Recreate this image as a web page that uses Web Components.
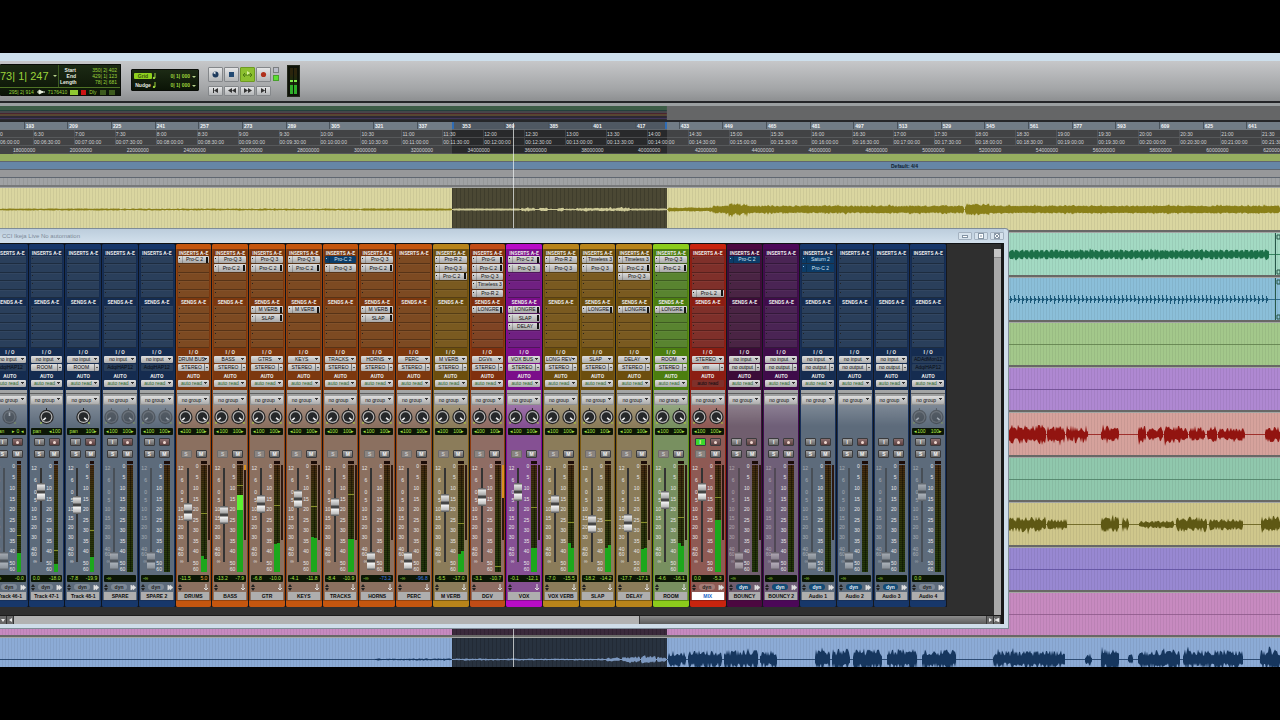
<!DOCTYPE html>
<html lang="en">
<head>
<meta charset="utf-8">
<title>CCI Ikeja Live No automation</title>
<style>
    html, body { margin: 0; height: 100%; background: #000; }
    body {
        font-family: "Liberation Sans", Arial, sans-serif;
        overflow: hidden;
    }
</style>
</head>
<body>
<session-window></session-window>

<script>
const SEL_START = 452;
const SEL_END = 667;

class BaseElement extends HTMLElement {
    constructor() {
        super();
        this.shadowDOM = this.attachShadow({mode: "open"});
    }

    connectedCallback() {
        this.render();
    }
}

// small repeatable noise, so the waveforms are the same on every load
function noise(seed) {
    let s = seed;
    return () => {
        s = (s * 16807) % 2147483647;
        return s / 2147483647;
    };
}

function wavePath(x0, x1, amp, mid, rnd, floor = 0.35) {
    const up = [];
    const down = [];
    for (let x = x0; x <= x1; x++) {
        const env = Math.min(1, (x - x0 + 1) / 2, (x1 - x + 1) / 2);
        const spike = rnd() > 0.9 ? 1.3 : 1;
        up.push(`${x} ${(mid - amp * env * spike * (floor + rnd() * (1 - floor))).toFixed(1)}`);
        down.unshift(`${x} ${(mid + amp * env * spike * (floor + rnd() * (1 - floor))).toFixed(1)}`);
    }
    return `M${up.join('L')}L${down.join('L')}Z`;
}

/* ---------- edit window: toolbar ---------- */

class EditToolbar extends BaseElement {
    render() {
        const note = '<svg width="4" height="6"><path d="M3 0v5" stroke="#9bd33a"/><circle cx="2" cy="5" r="1.200" fill="#9bd33a"/></svg>';
        this.shadowDOM.innerHTML = `
        <style>
        :host {
            display: flex;
            align-items: center;
            height: 40px;
            background: linear-gradient(#c6c7c9, #a3a5a7 70%, #8d8f91);
            border-bottom: 2px solid #242528;
            color: #9bd33a;
            font-size: 5px;
            font-weight: bold;
            line-height: 6px;
        }
        .lcd {
            background: linear-gradient(#1c2a14, #0b1406);
            border: 1px solid #0a0d08;
            border-radius: 1px;
            box-sizing: border-box;
            margin-bottom: 2px;
        }
        .counter {
            width: 121px;
            height: 32px;
            border-left: 0;
        }
        .top {
            display: flex;
            height: 22px;
            border-bottom: 1px solid #4f7326;
        }
        .main {
            width: 58px;
            font-size: 11px;
            font-weight: normal;
            line-height: 21px;
            white-space: nowrap;
            display: flex;
            align-items: center;
            gap: 4px;
            border-right: 1px solid #3c5a20;
        }
        i {
            display: inline-block;
            border: 2px solid transparent;
            border-top-color: #b7d48c;
            border-bottom: 0;
        }
        dl {
            flex: 1;
            margin: 2px 3px 0 1px;
            display: grid;
            grid-template-columns: 16px 1fr;
            grid-auto-rows: 6px;
            text-align: right;
        }
        dt { color: #e6ebe0; }
        dd { margin: 0; font-weight: normal; }
        .sub {
            display: flex;
            align-items: center;
            height: 8px;
            gap: 3px;
            padding-left: 9px;
            font-weight: normal;
        }
        .sub b { width: 6px; height: 5px; background: #3c5a1c; }
        .sub b.on { background: #8fc832; width: 8px; }
        .sub b.rec { background: #cc1414; width: 5px; }
        .nudge {
            width: 68px;
            height: 22px;
            margin-left: 10px;
            padding: 1px 2px;
            display: grid;
            grid-template-columns: 18px 6px 1fr 6px;
            grid-auto-rows: 9px;
            align-items: center;
            text-align: right;
        }
        .nudge span:nth-child(4n+1) { color: #e6ebe0; text-align: center; }
        .nudge span.on {
            background: #8fd01e;
            color: #35520c;
            border-radius: 1px;
        }
        .transport {
            display: grid;
            grid-template-columns: repeat(4, 15px);
            grid-template-rows: 15px 10px;
            gap: 4px 1px;
            margin-left: 9px;
        }
        button {
            padding: 0;
            border: 1px solid #84878a;
            border-radius: 1px;
            background: linear-gradient(#e4e5e6, #b4b6b8);
            display: grid;
            place-items: center;
        }
        button.on { background: #8cc030; border-color: #6d9a20; }
        svg { display: block; }
        .leds {
            display: grid;
            gap: 2px;
            margin: 0 8px 14px 2px;
        }
        .leds span {
            width: 4px;
            height: 4px;
            border: 1px solid #7a7d80;
            background: #b9bcc8;
        }
        .leds .on { background: #5ce032; border-color: #48a02c; }
        .meter {
            width: 13px;
            height: 32px;
            background: #0e1208;
            border: 1px solid #23281c;
            box-sizing: border-box;
            display: flex;
            justify-content: center;
            align-items: end;
            gap: 1px;
            padding-bottom: 2px;
        }
        .meter span {
            width: 3px;
            height: 26px;
            background: linear-gradient(#2b240c 6px, #1b2b0c 12px, #7ee84a 12px 14px, #1b2b0c 14px 17px, #2fae2a 17px);
        }
        </style>

        <div class="lcd counter">
            <div class="top">
                <div class="main"><span>73| 1| 247</span><i></i></div>
                <dl>
                    <dt>Start</dt><dd>350| 2| 402</dd>
                    <dt>End</dt><dd>429| 1| 123</dd>
                    <dt>Length</dt><dd>78| 2| 681</dd>
                </dl>
            </div>
            <div class="sub">
                <span>295| 2| 914</span>
                <svg width="8" height="6"><path d="M0 3h8M2 1v4l4-2z" stroke="#e8f0dc" fill="#e8f0dc"/></svg>
                <span>7176410</span>
                <b class="on"></b><b class="rec"></b><span>Dly</span><b></b><b></b>
            </div>
        </div>
        <div class="lcd nudge">
            <span class="on">Grid</span><span>${note}</span><span>0| 1| 000</span><span><i></i></span>
            <span>Nudge</span><span>${note}</span><span>0| 1| 000</span><span><i></i></span>
        </div>
        <div class="transport">
            <button aria-label="Online"><svg width="9" height="9"><circle cx="4.5" cy="4.5" r="3" fill="#1d3a5c"/><path d="M4.500 4.500V1.500A3 3 0 0 0 2 3z" fill="#dfe3e8"/></svg></button>
            <button aria-label="Stop"><svg width="7" height="7"><rect x="1" y="1" width="5" height="5" fill="#234a72"/></svg></button>
            <button class="on" aria-label="Loop play"><svg width="11" height="9"><path d="M1 5h8M3 3L1 5l2 2M8 3l2 2-2 2" stroke="#4d7a14" fill="none"/><path d="M5 1l3 2-3 2z" fill="#d8f0a0"/></svg></button>
            <button aria-label="Record"><svg width="7" height="7"><circle cx="3.500" cy="3.500" r="2.600" fill="#b0301c"/></svg></button>
            <button aria-label="Return to zero"><svg width="7" height="5"><path d="M1 0h1v5H1zM6 0v5L2 2.500z" fill="#333"/></svg></button>
            <button aria-label="Rewind"><svg width="8" height="5"><path d="M4 0v5L0 2.500zM8 0v5L4 2.500z" fill="#333"/></svg></button>
            <button aria-label="Fast forward"><svg width="8" height="5"><path d="M0 0v5l4-2.500zM4 0v5l4-2.500z" fill="#333"/></svg></button>
            <button aria-label="Go to end"><svg width="7" height="5"><path d="M5 0h1v5H5zM1 0v5l4-2.500z" fill="#333"/></svg></button>
        </div>
        <div class="leds"><span></span><span class="on"></span></div>
        <div class="meter"><span></span><span></span></div>
        `;
    }
}

/* ---------- edit window: rulers ---------- */

class TimeRuler extends BaseElement {
    render() {
        const two = n => String(n).padStart(2, '0');
        const cells = (n, text) => Array.from({length: n}, (_, i) => `<span>${text(i)}</span>`).join('');
        const secs = i => 360 + i * 30;

        this.shadowDOM.innerHTML = `
        <style>
        :host {
            display: block;
            position: relative;
            font-size: 5px;
            line-height: 8px;
            color: #d2d4d6;
        }
        .overview {
            height: 14px;
            border-top: 3px solid #9b9fa1;
            border-bottom: 2px solid #26272a;
            background: linear-gradient(#3c5c46 4px, #23403c 4px 5px, #46464a 5px 7px, #4a2430 7px 8px, #574632 8px 10px, #2c2836 10px 12px, #41365a 12px 13px, #2c2c30 13px) 0 0 / 52.1% 100% no-repeat #656667;
        }
        .row {
            display: grid;
            grid-auto-flow: column;
            grid-auto-columns: 1fr;
            overflow: hidden;
            height: 7px;
            border-bottom: 1px solid rgba(120, 122, 124, 0.4);
        }
        .clip {
            overflow: hidden;
            background: linear-gradient(#28292b, #28292b) 42.4% 0 / 16.8% 100% no-repeat #424345;
        }
        .clip.bars {
            background: linear-gradient(#4f5862, #4f5862) 42.4% 0 / 16.8% 100% no-repeat #717c86;
            color: #f2f4f6;
            font-weight: bold;
        }
        .bars .row { margin: 0 -10px 0 -20px; }
        .bars span { border-left: 1px solid #4b545c; padding-left: 1px; }
        .time .row { margin: 0 -22px 0 -8px; }
        .time span { border-left: 1px solid rgba(120, 122, 124, 0.3); }
        .samples .row { margin: 0 -40px 0 13px; }
        .bar {
            height: 7px;
            border-bottom: 1px solid #5f6670;
            color: #0e1c30;
            font-weight: bold;
            display: grid;
            grid-template-columns: 891fr 389fr;
        }
        .tempo { background: #96ae60; }
        .meter { background: #6686a6; }
        .markers { background: #97989a; }
        .edge {
            height: 7px;
            border-bottom: 2px solid #77787a;
            background: repeating-linear-gradient(90deg, #a0a2a4 0 3px, #969899 3px 4px);
        }
        .selection {
            position: absolute;
            top: 19px;
            left: 35.3%;
            width: 16.8%;
            height: 7px;
            border: solid #2f6cb4;
            border-width: 0 2px;
            box-sizing: border-box;
        }
        </style>

        <div class="overview"></div>
        <div class="clip bars"><div class="row">${cells(30, i => 177 + i * 16)}</div></div>
        <div class="clip time"><div class="row">${cells(32, i => Math.floor(secs(i) / 60) + ':' + two(secs(i) % 60))}</div></div>
        <div class="clip time"><div class="row">${cells(32, i => `00:${two(Math.floor(secs(i) / 60))}:${two(secs(i) % 60)}:00`)}</div></div>
        <div class="clip samples"><div class="row">${cells(23, i => (18 + i * 2) + '000000')}</div></div>
        <div class="bar tempo"></div>
        <div class="bar meter"><span></span><span>Default: 4/4</span></div>
        <div class="bar markers"></div>
        <div class="edge"></div>
        <div class="selection"></div>
        `;
    }
}

/* ---------- edit window: track lanes ---------- */

// segments are [from, to, amplitude, floor]
const lanes = [
    {bg: '#dad6a0', wave: '#8a8018', sel: '#4b4834', lit: '#cfcb98', segs: [
        [0, 120, 1, .6], [121, 360, 1, .4], [361, 452, 1, .8],
        [453, 520, 1, .8], [521, 535, 2], [536, 538, 1], [539, 548, 2], [549, 556, 1], [557, 564, 2],
        [565, 575, 1], [576, 630, 2], [631, 667, 1, .7],
        [668, 715, 2, .6], [712, 729, 4, .6], [728, 748, 6, .5], [740, 964, 4, .7], [965, 990, 6, .6], [985, 1280, 4, .75]
    ]},
    {bg: '#a3dac3', wave: '#1c7048', sel: '#2e4038', segs: Array.from({length: 52}, (_, i) => [1009 + i * 5, 1014 + i * 5, 5, .7]), end: true},
    {bg: '#8bbfd9', wave: '#1a5878', sel: '#2a3c48', ticks: true, end: true},
    {bg: '#a3c88b', wave: '#5c7c48', sel: '#343c2c', segs: []},
    {bg: '#af88d2', wave: '#69478c', sel: '#362c40', segs: []},
    {bg: '#d6a29c', wave: '#921410', sel: '#443230', segs: [[1008, 1046, 10], [1047, 1065, 9], [1066, 1088, 9, .2], [1101, 1119, 8], [1138, 1146, 9], [1147, 1163, 7], [1164, 1188, 9], [1189, 1205, 7], [1207, 1217, 9], [1218, 1245, 7], [1265, 1280, 8]]},
    {bg: '#90c8ad', wave: '#4a7c62', sel: '#2c3c34', segs: []},
    {bg: '#cfc78c', wave: '#5e5814', sel: '#403c2c', segs: [[1008, 1046, 8], [1047, 1067, 6], [1101, 1119, 8], [1122, 1129, 6], [1139, 1174, 4], [1176, 1207, 8], [1209, 1243, 6], [1261, 1280, 9]]},
    {bg: '#9888d2', wave: '#5c4c9c', sel: '#302c40', segs: []},
    {bg: '#c78ac0', wave: '#8c5888', sel: '#3b2a3c', segs: []},
    {bg: '#8cabd6', wave: '#16365e', sel: '#28323f', lit: '#7c98c0', segs: [
        [375, 451, 1, .2], [453, 605, 1, .2], [606, 620, 2], [622, 640, 3], [641, 656, 4], [657, 666, 3],
        [668, 686, 8], [688, 722, 9], [724, 758, 10], [760, 777, 9], [815, 830, 11], [832, 850, 11], [853, 882, 11],
        [887, 917, 11], [922, 956, 10], [993, 1065, 9], [1085, 1092, 5], [1101, 1119, 11], [1128, 1133, 5],
        [1138, 1180, 10], [1183, 1243, 10], [1260, 1280, 11]
    ]}
];

class TrackLane extends BaseElement {
    render() {
        const lane = this.lane;
        const rnd = noise(this.index * 977 + 31);
        let waves = '';
        if (lane.ticks) {
            let d = '';
            for (let x = 1010; x < 1270; x += 4) {
                d += `M${x}.5 ${rnd() > .5 ? 17 : 18}v${rnd() > .5 ? 8 : 7}M${x + 1}.5 20v3`;
            }
            waves = `<path d="${d}" stroke="${lane.wave}"/>`;
        } else {
            waves = lane.segs.map(([a, b, amp, floor]) => {
                const lit = lane.lit && a >= SEL_START && b <= SEL_END;
                return `<path d="${wavePath(a, b, amp, 21.5, rnd, floor)}" fill="${lit ? lane.lit : lane.wave}"/>`;
            }).join('');
        }
        this.shadowDOM.innerHTML = `
        <style>
        :host {
            display: block;
            height: 42px;
            border-top: 1px solid #a4a6a4;
            border-bottom: 2px solid #686866;
            background: repeating-linear-gradient(90deg, transparent 0 2px, rgba(0, 0, 0, 0.06) 2px 3px) ${lane.bg};
        }
        svg { display: block; width: 100%; height: 42px; }
        </style>
        <svg viewBox="0 0 1280 42" preserveAspectRatio="none">
            <rect x="${SEL_START}" width="${SEL_END - SEL_START}" height="42" fill="${lane.sel}"/>
            <path d="${Array.from({length: 54}, (_, i) => `M${SEL_START + i * 4}.5 0v42`).join('')}" stroke="#000" stroke-opacity=".15"/>
            <path d="M0 21.500H1280" stroke="${lane.wave}" stroke-opacity=".8"/>
            ${lane.lit ? `<path d="M${SEL_START} 21.500H${SEL_END}" stroke="${lane.lit}"/>` : ''}
            ${waves}
            ${lane.end ? '<path d="M1275.500 0v42M1277 2h3v4h-3zM1277 37h3v4h-3z" stroke="#28584a" fill="none"/>' : ''}
        </svg>
        `;
    }
}

/* ---------- mixer parts ---------- */

class PluginSlot extends BaseElement {
    render() {
        const name = this.getAttribute('name');
        this.shadowDOM.innerHTML = `
        <style>
        :host {
            display: grid;
            background: var(--slot);
            box-shadow: inset 0 -1px rgba(0, 0, 0, 0.3), inset 0 1px rgba(255, 255, 255, 0.04);
            min-width: 0;
        }
        button {
            display: grid;
            grid-template-columns: 4px 1fr auto;
            align-items: center;
            margin: 0 0 1px;
            padding: 0;
            border: 0;
            border-radius: 1px;
            background: linear-gradient(#dcdcdc, #a9a9a9);
            color: #0c0c0c;
            font: 5px/7px "Liberation Sans", Arial, sans-serif;
            white-space: nowrap;
        }
        button::before, .empty::before {
            content: "";
            display: block;
            width: 1px;
            height: 1px;
            margin: 2px 1px;
            background: #222;
            align-self: start;
        }
        :host([blue]) button { background: #0c3c68; color: #d4e4f4; }
        :host([blue]) button::before { background: #9cc4e8; }
        span { border-left: 1px solid rgba(0, 0, 0, 0.2); }
        b { width: 2px; height: 6px; margin-right: 1px; background: #111; }
        </style>
        ${name
            ? `<button><span>${name}</span>${this.hasAttribute('gain') ? '<b></b>' : ''}</button>`
            : '<div class="empty"></div>'}
        `;
    }
}

class PanKnob extends BaseElement {
    render() {
        const dim = this.hasAttribute('dim');
        this.shadowDOM.innerHTML = `
        <style>
        :host { display: grid; width: 17px; height: 18px; ${dim ? 'opacity: .4;' : ''} }
        svg, input { grid-area: 1 / 1; width: 100%; height: 100%; margin: 0; }
        input { opacity: 0; }
        </style>
        <svg viewBox="0 0 17 18">
            <circle cx="8.500" cy="9" r="7.200" fill="#242424"/>
            <circle cx="8.500" cy="9" r="6" fill="${dim ? '#666' : '#b8b8b8'}"/>
            <circle cx="8.500" cy="9" r="4.800" fill="#26282a"/>
            <path d="M8.500 8V4.500" stroke="#f4f4f4" stroke-width="1.600" transform="rotate(${this.getAttribute('turn')} 8.500 9)"/>
            <path d="M8.500 0v2" stroke="#222"/>
            <path d="${this.getAttribute('turn') < 0 ? 'M2 15h2' : 'M13 15h2'}" stroke="#b4d838"/>
        </svg>
        <input type="range" aria-label="Pan" min="-135" max="135" value="${this.getAttribute('turn')}">
        `;
    }
}

class LevelMeter extends BaseElement {
    render() {
        const levels = this.getAttribute('levels').split('/');
        const peak = this.getAttribute('peak');
        this.shadowDOM.innerHTML = `
        <style>
        :host {
            display: grid;
            grid-template-rows: 3px 1fr;
            gap: 1px;
        }
        .clip { background: #1c0c08; }
        .cols {
            display: flex;
            background: #14180a;
            position: relative;
        }
        .cols div {
            flex: 1;
            display: flex;
            align-items: end;
            background: repeating-linear-gradient(transparent 0 1px, rgba(0, 0, 0, 0.25) 1px 2px), linear-gradient(#462a10, #38360c 30%, #20360a);
        }
        .cols div + div { box-shadow: inset 1px 0 rgba(0, 0, 0, 0.35); }
        .cols span { width: 100%; background: #1ca81c; }
        .cols span.hot { background: linear-gradient(#5cf032 15px, #1ca81c 15px); }
        hr {
            position: absolute;
            left: 0;
            right: 0;
            margin: 0;
            border: 0;
            height: 1px;
            background: #868e2a;
        }
        </style>
        <div class="clip"></div>
        <div class="cols">
            ${levels.map(l => `<div><span class="${l > 60 ? 'hot' : ''}" style="height:${l}px"></span></div>`).join('')}
            ${peak ? `<hr style="bottom:${peak}px">` : ''}
        </div>
        `;
    }
}

const themes = {
    navy:    {cap: '#17376a', body: '#152c50', slot: '#2a3f5b', panel: '#5d6b7b', edge: '#17305a'},
    orange:  {cap: '#c4560f', body: '#7c380f', slot: '#7d4a22', panel: '#8b7060', edge: '#94430e'},
    mustard: {cap: '#b8841a', body: '#6c4e0e', slot: '#7a5a20', panel: '#8b7c5a', edge: '#7c5a12'},
    rust:    {cap: '#c04c16', body: '#80300e', slot: '#7f4424', panel: '#8f6d64', edge: '#8e3a0f'},
    magenta: {cap: '#b80cc6', body: '#7b0e8a', slot: '#702082', panel: '#855093', edge: '#880a96'},
    green:   {cap: '#8ccc1c', body: '#4c7e10', slot: '#598430', panel: '#789060', edge: '#5c9012'},
    red:     {cap: '#c8240e', body: '#8b1d12', slot: '#7f302a', panel: '#8e5a54', edge: '#921e12'},
    plum:    {cap: '#4c0840', body: '#3c0c38', slot: '#4a2444', panel: '#705e6e', edge: '#420c3c'},
    violet:  {cap: '#4c0858', body: '#3f0c4a', slot: '#4a2454', panel: '#6f5f78', edge: '#440c50'}
};

// inserts and sends: "*" marks a chip with a small meter, "!" a bypassed (blue) one
const channels = [
    {name: 'Track 46-1', out: '~AdqiHAP12', knobs: 'C', level: '19', peak: 36, fader: 0, vol: '-∞', db: '-0.0', audio: 1, dim: 1},
    {name: 'Track 47-1', out: 'ROOM', knobs: 'L', level: '8', peak: 21, fader: 69, vol: '0.0', db: '-18.0', audio: 1},
    {name: 'Track 48-1', out: 'ROOM', knobs: 'R', level: '15', peak: 41, fader: 56, vol: '-7.8', db: '-19.9', audio: 1},
    {name: 'SPARE', out: '~AdqiHAP12', level: '0/0', fader: 0, vol: '-∞', audio: 1, dim: 1},
    {name: 'SPARE 2', out: '~AdqiHAP12', level: '0/0', fader: 0, vol: '-∞', audio: 1, dim: 1},
    {name: 'DRUMS', theme: 'orange', ins: ['Pro-C 2*'], inp: 'DRUM BUS', level: '16/13', peak: 58, gr: 1, fader: 49, vol: '-11.5', db: '5.0', dbColor: '#e8a838'},
    {name: 'BASS', theme: 'orange', ins: ['Pro-Q 3', 'Pro-C 2*'], inp: 'BASS', level: '77/77', peak: 86, gr: 1, grHot: 5, fader: 46, vol: '-13.2', db: '-7.9'},
    {name: 'GTR', theme: 'orange', ins: ['Pro-Q 3', 'Pro-C 2*'], sends: ['M VERB*', 'SLAP*'], inp: 'GTRS', level: '28/29', peak: 66, gr: 1, fader: 57, vol: '-6.8', db: '-10.0'},
    {name: 'KEYS', theme: 'orange', ins: ['Pro-Q 3', 'Pro-C 2*'], sends: ['M VERB*'], inp: 'KEYS', level: '35/34', peak: 65, gr: 1, fader: 62, vol: '-4.1', db: '-11.8'},
    {name: 'TRACKS', theme: 'orange', ins: ['Pro-C 2!', 'Pro-Q 3'], inp: 'TRACKS', level: '33/33', peak: 77, gr: 1, fader: 54, vol: '-8.4', db: '-10.9'},
    {name: 'HORNS', theme: 'orange', ins: ['Pro-Q 3', 'Pro-C 2*'], sends: ['M VERB*', 'SLAP*'], inp: 'HORNS', level: '0/0', gr: 1, fader: 0, vol: '-∞', db: '-73.2', dbColor: '#3c7ce0'},
    {name: 'PERC', theme: 'orange', inp: 'PERC', level: '0/0', fader: 0, vol: '-∞', db: '-96.8', dbColor: '#3c7ce0'},
    {name: 'M VERB', theme: 'mustard', ins: ['Pro-R 2', 'Pro-Q 3', 'Pro-C 2*'], inp: 'M VERB', level: '18/21', peak: 48, gr: 1, fader: 58, vol: '-6.5', db: '-17.0'},
    {name: 'DGV', theme: 'rust', ins: ['Pro-G*', 'Pro-C 2*', 'Pro-Q 3', 'Timeless 3', 'Pro-R 2'], sends: ['LONGRE*'], inp: 'DGVs', level: '0/0', peak: 5, gr: 1, grHot: 33, fader: 64, vol: '-3.1', db: '-10.7'},
    {name: 'VOX', theme: 'magenta', ins: ['Pro-C 2*', 'Pro-Q 3'], sends: ['LONGRE*', 'SLAP*', 'DELAY*'], inp: 'VOX BUS', level: '24/24', peak: 64, gr: 1, fader: 69, vol: '-0.1', db: '-12.1'},
    {name: 'VOX VERB', theme: 'mustard', ins: ['Pro-R 2', 'Pro-Q 3'], inp: 'LONG REV', level: '29/24', peak: 49, fader: 57, vol: '-7.0', db: '-15.5'},
    {name: 'SLAP', theme: 'mustard', ins: ['Timeless 3', 'Pro-Q 3'], sends: ['LONGRE*'], inp: 'SLAP', level: '24/27', peak: 51, fader: 37, vol: '-18.2', db: '-14.2'},
    {name: 'DELAY', theme: 'mustard', ins: ['Timeless 3', 'Pro-C 2*', 'Pro-Q 3'], sends: ['LONGRE*'], inp: 'DELAY', level: '23/24', peak: 49, gr: 1, fader: 38, vol: '-17.7', db: '-17.1'},
    {name: 'ROOM', theme: 'green', ins: ['Pro-Q 3', 'Pro-C 2*'], sends: ['LONGRE*'], inp: 'ROOM', level: '29/26', peak: 54, gr: 1, fader: 61, vol: '-4.6', db: '-16.1'},
    {name: 'MIX', theme: 'red', ins: ['', '', '', '', 'Pro-L 2*'], inp: 'STEREO', out: 'vm', auto: '~auto read', level: '52/52', peak: 74, gr: 1, fader: 69, vol: '0.0', db: '-5.3', audio: 1, monitor: 1, selected: 1},
    {name: 'BOUNCY', theme: 'plum', ins: ['Pro-C 2!'], out: 'no output', knobs: '', level: '0/0', gr: 1, fader: 0, vol: '-∞', audio: 1, dyn: 1, dim: 1},
    {name: 'BOUNCY 2', theme: 'violet', out: 'no output', knobs: '', level: '0/0', fader: 0, vol: '-∞', audio: 1, dyn: 1, dim: 1},
    {name: 'Audio 1', ins: ['Saturn 2!', 'Pro-C 2!'], out: 'no output', knobs: '', level: '0/0', gr: 1, fader: 0, vol: '-∞', audio: 1, dyn: 1, dim: 1},
    {name: 'Audio 2', out: 'no output', knobs: '', level: '0/0', fader: 0, vol: '-∞', audio: 1, dyn: 1, dim: 1},
    {name: 'Audio 3', out: 'no output', knobs: '', level: '0/0', fader: 0, vol: '-∞', audio: 1, dyn: 1, dim: 1},
    {name: 'Audio 4', inp: '~ADAdMon12', out: '~AdqiHAP12', level: '0/0', fader: 69, vol: '0.0', audio: 1, dim: 1}
];

class ChannelStrip extends BaseElement {
    slots(list = []) {
        return Array.from({length: 5}, (_, i) => {
            const item = list[i] || '';
            return `<plugin-slot name="${item.replace(/[*!]/, '')}"${item.endsWith('*') ? ' gain' : ''}${item.endsWith('!') ? ' blue' : ''}></plugin-slot>`;
        }).join('');
    }

    // a leading "~" means the path is not available
    select(label, value, cls = '') {
        const off = value.startsWith('~');
        return `<select aria-label="${label}" class="${cls}${off ? ' off' : ''}"><option>${value.replace('~', '')}</option></select>`;
    }

    pan(ch) {
        const kinds = ch.knobs === undefined ? 'LR' : ch.knobs;
        const turn = {L: -135, R: 135, C: 0};
        const dim = ch.dim ? ' dim' : '';
        const read = {LR: '<span>◂100</span><span>100▸</span>', L: '<span>pan</span><span>◂100</span>', R: '<span>pan</span><span>100▸</span>', C: '<span>pan</span><span>▸ 0 ◂</span>'};
        return `
        <div class="knobs">${[...kinds].map(k => `<pan-knob turn="${turn[k]}"${dim}></pan-knob>`).join('')}</div>
        <div class="lcd${kinds ? '' : ' none'}">${read[kinds] || ''}</div>`;
    }

    render() {
        const ch = this.channel;
        const t = themes[ch.theme || 'navy'];
        const scale = list => list.map(n => `<span>${n}</span>`).join('');

        this.shadowDOM.innerHTML = `
        <style>
        :host {
            --slot: ${t.slot};
            display: flex;
            flex-direction: column;
            min-width: 0;
            margin-right: 1px;
            background: ${t.edge};
            border-radius: 2px;
            overflow: hidden;
            font-size: 5px;
            font-weight: bold;
            color: #e6e6e6;
            line-height: 7px;
        }
        .cap { height: 5px; background: ${t.cap}; }
        .cap.foot { height: 6px; margin-top: 1px; }
        .upper {
            height: 141px;
            margin: 0 1px;
            padding: 0 1px;
            background: ${t.body};
        }
        h3 {
            height: 8px;
            margin: 0;
            font: bold 5px/8px Roboto, "Liberation Sans", Arial, sans-serif;
            text-align: center;
            white-space: nowrap;
        }
        h3:first-child, h3.auto { height: 7px; }
        h3.auto { margin-top: 2px; line-height: 7px; }
        .slots {
            display: grid;
            grid-template-rows: repeat(5, 1fr);
            height: 42px;
        }
        select {
            display: block;
            appearance: none;
            width: 100%;
            height: 7px;
            margin: 0 0 1px;
            padding: 0 4px 0 0;
            border: 0;
            border-radius: 1px;
            background:
                linear-gradient(#333, #333) right 2px top 2px / 3px 1px no-repeat,
                linear-gradient(#333, #333) right 3px top 3px / 1px 1px no-repeat,
                linear-gradient(#dedede, #adadad);
            color: #0c0c0c;
            font: 5px/7px "Liberation Sans", Arial, sans-serif;
            text-align: center;
            text-align-last: center;
        }
        select.out {
            background:
                linear-gradient(#777, #777) right 4px top / 1px 7px no-repeat,
                linear-gradient(#555, #555) right 1px top 3px / 2px 1px no-repeat,
                linear-gradient(#dedede, #adadad);
        }
        select.read { color: #2c6a2c; }
        select.off { background: var(--slot); color: #060a12; padding: 0; }
        .lower {
            display: flex;
            flex-direction: column;
            height: 204px;
            margin: 0 1px;
            padding: 6px 1px 0;
            background:
                linear-gradient(rgba(50, 50, 50, 0.6), rgba(50, 50, 50, 0.6)) 0 3px / 100% 1px no-repeat,
                linear-gradient(#a4a6a6, #909292) 0 0 / 100% 15px no-repeat,
                linear-gradient(#fff3 15px, transparent 36px),
                ${t.panel};
        }
        .group { height: 8px; margin: 0; }
        .knobs {
            display: flex;
            justify-content: center;
            height: 18px;
            margin: 4px -1px 2px;
        }
        .lcd {
            display: flex;
            flex: none;
            justify-content: space-between;
            box-sizing: border-box;
            height: 7px;
            padding: 0 2px;
            border-radius: 1px;
            background: #0c1606;
            color: #b0e848;
            font-weight: normal;
            white-space: nowrap;
        }
        .lcd.none { visibility: hidden; }
        .keys {
            display: grid;
            grid-template-columns: 11px 11px;
            justify-content: center;
            gap: 4px;
            height: 8px;
            margin-top: 3px;
        }
        .keys + .keys { margin-top: 4px; }
        .keys button {
            padding: 0;
            border: 1px solid #3a3a3c;
            border-radius: 1px;
            background: linear-gradient(#a4a4a4, #626262);
            color: #f4f4f4;
            font: bold 5px/6px "Liberation Sans", Arial, sans-serif;
        }
        .keys .rec { background: linear-gradient(#8c7070, #5a3e3e); }
        .keys .rec::before {
            content: "";
            display: block;
            width: 3px;
            height: 3px;
            margin: auto;
            border-radius: 50%;
            background: #f0d8d0;
        }
        .keys .live { background: #3cd82c; }
        .keys .safe { background: #8a8480; color: #ccc; border-color: #6e6a68; }
        .throw {
            display: grid;
            grid-template-columns: 6px 8px 7px ${ch.level.includes('/') ? '8px' : '6px'} 3px;
            height: 109px;
            margin: 3px -1px 0 0;
            font-weight: normal;
            line-height: 6px;
            text-align: right;
        }
        .scale { display: grid; align-content: start; color: #e8e8e8; }
        .fade { grid-template-rows: 12px 12px 8px 9px 9px 9px 10px 12px 5px 7px 6px; padding-top: 4px; }
        .scale.dim { opacity: .5; }
        .vu { grid-template-rows: 11px 11px 11px 10px 11px 10px 11px 10px 12px 6px 6px; padding-top: 2px; }
        level-meter { margin-left: 2px; }
        .throw input {
            appearance: none;
            writing-mode: vertical-lr;
            direction: rtl;
            width: 8px;
            height: 108px;
            margin: 1px 0 0;
            background: linear-gradient(#333, #333) 3px 6px / 2px 94px no-repeat;
            ${ch.dim ? 'opacity: .5;' : ''}
        }
        .throw input::-webkit-slider-thumb {
            appearance: none;
            width: 8px;
            height: 18px;
            border-radius: 1px;
            background: linear-gradient(#6a6a6a 1px, #e4e4e4 2px, #a8a8a8 7px, #444 8px 10px, #f4f4f4 11px, #bcbcbc 16px, #666 17px);
        }
        .gr { height: 75px; margin: 4px 0 0 1px; }
        .gr.on { background: linear-gradient(#d89020, #d89020) 0 0 / 100% ${ch.grHot || 0}px no-repeat #2c1810; }
        .vol { margin-top: 5px; }
        .vol span:last-child:not(:first-child) { color: ${ch.dbColor || 'inherit'}; }
        .dyn {
            display: grid;
            grid-template-columns: 4px 1fr 6px;
            align-items: center;
            gap: 2px;
            height: 8px;
            margin-top: 1px;
        }
        .dyn button {
            padding: 0;
            height: 6px;
            border: 0;
            border-radius: 3px;
            margin: 0 1px;
            background: ${ch.dyn ? '#134a74' : 'rgba(255, 255, 255, 0.2)'};
            color: ${ch.dyn ? '#e4eef8' : '#222'};
            font: bold 5px/6px "Liberation Sans", Arial, sans-serif;
        }
        svg { display: block; }
        .name {
            height: 8px;
            margin: 1px 0 0;
            background: ${ch.selected ? '#fff' : '#aeaeae'};
            color: ${ch.selected ? '#1c64c8' : '#0c0c0c'};
            line-height: 8px;
            text-align: center;
            white-space: nowrap;
        }
        </style>

        <div class="cap"></div>
        <div class="upper">
            <h3>INSERTS A-E</h3>
            <div class="slots">${this.slots(ch.ins)}</div>
            <h3>SENDS A-E</h3>
            <div class="slots">${this.slots(ch.sends)}</div>
            <h3>I / O</h3>
            ${this.select('Input', ch.inp || 'no input')}
            ${this.select('Output', ch.out || 'STEREO', 'out')}
            <h3 class="auto">AUTO</h3>
            ${this.select('Automation', ch.auto || 'auto read', 'read')}
        </div>
        <div class="lower">
            ${this.select('Group', 'no group', 'group')}
            ${this.pan(ch)}
            <div class="keys">${ch.audio ? `<button class="${ch.monitor ? 'live' : ''}">I</button><button class="rec" aria-label="Record"></button>` : ''}</div>
            <div class="keys"><button class="${ch.audio && !ch.monitor ? '' : 'safe'}">S</button><button>M</button></div>
            <div class="throw">
                <div class="scale fade${ch.dim ? ' dim' : ''}">${scale([12, 6, 0, 5, 10, 15, 20, 30, 40, 60, '∞'])}</div>
                <input type="range" aria-label="Volume" min="0" max="90" value="${ch.fader}">
                <div class="scale vu">${scale([0, 5, 10, 15, 20, 25, 30, 35, 40, 50, 60])}</div>
                <level-meter levels="${ch.level}" peak="${ch.peak || ''}"></level-meter>
                <div class="gr${ch.gr ? ' on' : ''}"></div>
            </div>
            <div class="lcd vol"><span>${ch.vol}</span>${ch.db ? `<span>${ch.db}</span>` : ''}</div>
            <div class="dyn">
                <svg width="4" height="7"><path d="M0 3l2-3 2 3zM0 4l2 3 2-3z" fill="#222"/></svg>
                ${ch.audio ? '<button>dyn</button>' : '<span></span>'}
                <svg width="6" height="7">${ch.audio
                    ? '<path d="M0 1v5M1 1l3 2.500-3 2.500zM3 1l3 2.500-3 2.500z" fill="#e0e0e0" stroke="#e0e0e0" stroke-width=".5"/>'
                    : '<path d="M3 0v6M1 4l2 2 2-2" fill="none" stroke="#e0e0e0"/>'}</svg>
            </div>
            <div class="name">${ch.name}</div>
        </div>
        <div class="cap foot"></div>
        `;
    }
}

class MixerWindow extends BaseElement {
    render() {
        this.shadowDOM.innerHTML = `
        <style>
        :host {
            display: block;
            padding: 0 4px 4px 0;
            background: #cfdde9;
            border: solid #7f8c98;
            border-width: 1px 1px 1px 0;
            border-radius: 0 4px 0 0;
            overflow: hidden;
            box-sizing: border-box;
        }
        header {
            display: flex;
            align-items: center;
            gap: 2px;
            height: 14px;
            padding-left: 2px;
            background: linear-gradient(#bccddc, #d2e0ec);
        }
        h2 {
            flex: 1;
            margin: 0;
            font-size: 6px;
            font-weight: normal;
            line-height: 14px;
            color: #7c8a98;
        }
        header button {
            width: 14px;
            height: 8px;
            padding: 0;
            border: 1px solid #a4b2c0;
            border-radius: 1px;
            background: #d6e2ec;
            display: grid;
            place-items: center;
        }
        svg { display: block; }
        .body {
            background: #2f2f2f;
            border-top: 1px solid #101214;
            border-right: 3px solid #181818;
            overflow: hidden;
        }
        .view { display: flex; }
        .strips {
            flex: 1;
            display: grid;
            grid-template-columns: repeat(26, minmax(0, 1fr));
            margin: 0 47px 8px -8px;
            background: linear-gradient(90deg, #0c1420, #16181c);
        }
        .vbar {
            width: 7px;
            margin-top: 5px;
            background: linear-gradient(#c4c4c4 8px, #888 8px 9px, #a9a9a9 9px);
        }
        .hbar {
            display: flex;
            height: 8px;
            border-top: 1px solid #1c1c1c;
            background: #b2b2b2;
        }
        .hbar button {
            width: 7px;
            padding: 0;
            border: 0;
            border-right: 1px solid #333;
            background: #686868;
            display: grid;
            place-items: center;
        }
        .hbar .free { flex: 627; }
        .hbar .thumb {
            flex: 347;
            background: linear-gradient(#8c8c8c, #5c5c5c);
            border: solid #3a3a3a;
            border-width: 0 1px;
        }
        </style>

        <header>
            <h2>CCI Ikeja Live No automation</h2>
            <button aria-label="Minimize"><svg width="6" height="4"><rect x=".5" y="1.500" width="5" height="2" fill="#fff" stroke="#8494a4"/></svg></button>
            <button aria-label="Restore"><svg width="6" height="6"><rect x=".5" y=".5" width="5" height="5" fill="#fff" stroke="#8494a4"/><path d="M2 3h2" stroke="#8494a4"/></svg></button>
            <button aria-label="Close"><svg width="6" height="6"><rect x=".5" y=".5" width="5" height="5" fill="#fff" stroke="#8c9aa8"/><path d="M1 1l4 4M5 1L1 5" stroke="#8494a4"/></svg></button>
        </header>
        <div class="body">
            <div class="view"><div class="strips"></div><div class="vbar"></div></div>
            <div class="hbar">
                <button aria-label="Menu"><svg width="4" height="3"><path d="M0 0h4L2 3z" fill="#eee"/></svg></button>
                <button aria-label="Scroll left"><svg width="3" height="4"><path d="M3 0v4L0 2z" fill="#eee"/></svg></button>
                <div class="free"></div>
                <div class="thumb"></div>
                <button aria-label="Scroll right"><svg width="3" height="4"><path d="M0 0v4l3-2z" fill="#eee"/></svg></button>
                <button aria-label="Narrow mix"><svg width="6" height="4"><path d="M.5 0v4M5 0v4L1 2z" fill="#eee" stroke="#eee" stroke-width=".5"/></svg></button>
            </div>
        </div>
        `;

        const strips = this.shadowDOM.querySelector('.strips');
        channels.forEach(channel => {
            const strip = document.createElement('channel-strip');
            strip.channel = channel;
            strips.appendChild(strip);
        });
    }
}

class SessionWindow extends BaseElement {
    render() {
        this.shadowDOM.innerHTML = `
        <style>
        :host {
            display: block;
            box-sizing: border-box;
            height: 100vh;
            padding: 53px 0;
            background: #000;
        }
        main {
            position: relative;
            height: 100%;
            overflow: hidden;
            background: #8c8c8c;
        }
        .frame { height: 8px; background: #cddfec; }
        .playhead {
            position: absolute;
            top: 70px;
            bottom: 0;
            left: 40.1%;
            width: 1px;
            background: rgba(240, 244, 244, 0.7);
        }
        mixer-window {
            position: absolute;
            top: 175px;
            left: 0;
            right: 271px;
        }
        </style>
        <main>
            <div class="frame"></div>
            <edit-toolbar></edit-toolbar>
            <time-ruler></time-ruler>
            <div class="lanes"></div>
            <div class="playhead"></div>
            <mixer-window></mixer-window>
        </main>
        `;

        const holder = this.shadowDOM.querySelector('.lanes');
        lanes.forEach((lane, index) => {
            const el = document.createElement('track-lane');
            el.lane = lane;
            el.index = index;
            holder.appendChild(el);
        });
    }
}

customElements.define('edit-toolbar', EditToolbar);
customElements.define('time-ruler', TimeRuler);
customElements.define('track-lane', TrackLane);
customElements.define('plugin-slot', PluginSlot);
customElements.define('pan-knob', PanKnob);
customElements.define('level-meter', LevelMeter);
customElements.define('channel-strip', ChannelStrip);
customElements.define('mixer-window', MixerWindow);
customElements.define('session-window', SessionWindow);
</script>
</body>
</html>
